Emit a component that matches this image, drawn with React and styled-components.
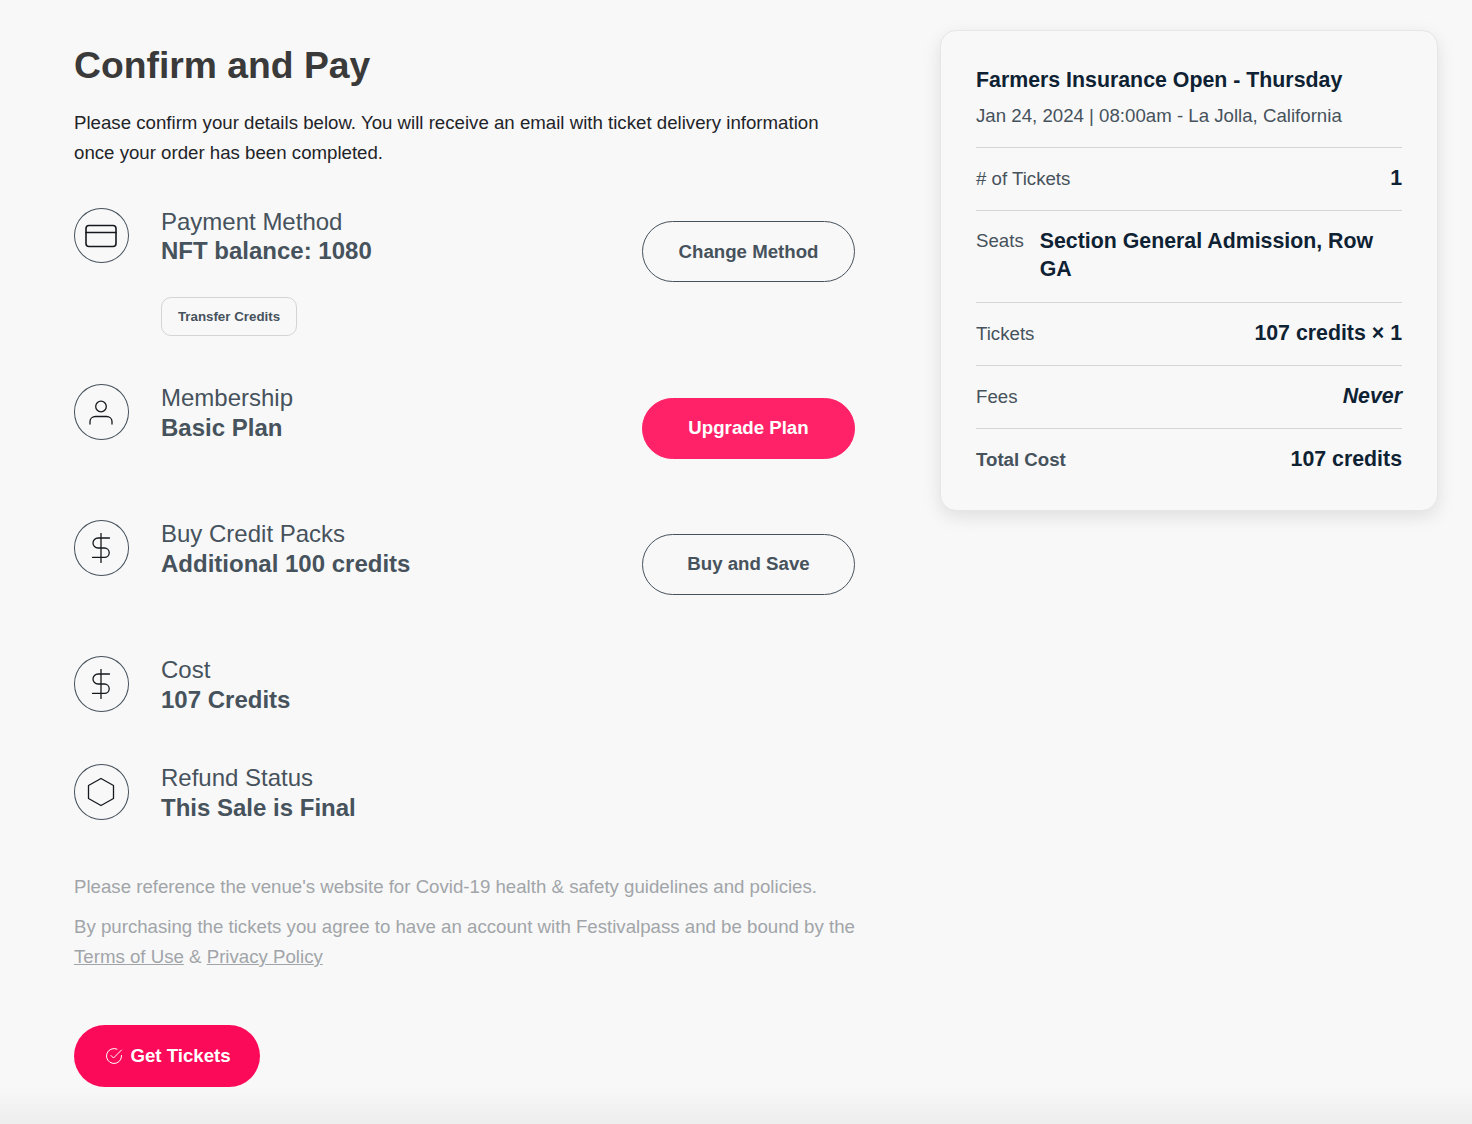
import React from 'react';
import styled, { createGlobalStyle } from 'styled-components';

const GlobalStyle = createGlobalStyle`
  html, body {
    margin: 0;
    padding: 0;
    background: #f8f8f8;
    font-family: "Liberation Sans", Arial, sans-serif;
  }
  * {
    box-sizing: border-box;
  }
`;

const Page = styled.div`
  position: relative;
  display: flex;
  align-items: flex-start;
  height: 1124px;
  padding: 30px 34px 0 74px;
  overflow: hidden;
  background: #f8f8f8;
`;

const BottomShade = styled.div`
  position: absolute;
  left: 0;
  right: 0;
  bottom: 0;
  height: 36px;
  background: linear-gradient(to bottom, rgba(236, 236, 236, 0), #ededed);
  pointer-events: none;
`;

const Main = styled.main`
  position: relative;
  z-index: 1;
  width: 781px;
  flex-shrink: 0;
`;

const Title = styled.h1`
  margin: 0;
  padding-top: 12px;
  font-size: 37.3px;
  line-height: 46px;
  font-weight: 700;
  color: #3a3a3a;
`;

const Intro = styled.p`
  margin: 20px 0 0;
  font-size: 18.67px;
  line-height: 30px;
  color: #1f2428;
`;

const Rows = styled.div`
  margin-top: 40px;
`;

const Row = styled.div`
  display: flex;
  align-items: flex-start;
  height: ${(p) => p.$height}px;
`;

const IconCircle = styled.div`
  display: flex;
  align-items: center;
  justify-content: center;
  width: 55px;
  height: 55.4px;
  padding-right: 1px;
  flex-shrink: 0;
  border: 1px solid #46525c;
  border-radius: 50%;
  color: #15191d;
`;

const RowBody = styled.div`
  flex: 1;
  margin-left: 32px;
`;

const RowLabel = styled.div`
  margin-top: -1px;
  font-size: 24px;
  line-height: 29.3px;
  color: #46525c;
`;

const RowValue = styled.div`
  font-size: 24px;
  line-height: 29px;
  font-weight: 700;
  color: #46525c;
`;

const SmallButton = styled.button`
  display: block;
  width: 136px;
  height: 39px;
  margin-top: 31.7px;
  padding: 0;
  background: transparent;
  border: 1px solid #d2d4d6;
  border-radius: 10px;
  font-family: inherit;
  font-size: 13.33px;
  font-weight: 700;
  color: #46525c;
`;

const PillButton = styled.button`
  width: 213px;
  height: 61px;
  margin-top: 13.2px;
  padding: 0;
  flex-shrink: 0;
  border-radius: 31px;
  border: 1px solid ${(p) => (p.$primary ? '#ff2268' : '#46525c')};
  background: ${(p) => (p.$primary ? '#ff2268' : 'transparent')};
  color: ${(p) => (p.$primary ? '#fff' : '#46525c')};
  font-family: inherit;
  font-size: 18.67px;
  font-weight: 700;
`;

const Notes = styled.div`
  font-size: 18.67px;
  line-height: 30px;
  color: #a1a5a9;
`;

const Note = styled.p`
  margin: 0 0 10px;
  white-space: nowrap;
`;

const NoteLink = styled.a`
  color: #a1a5a9;
  text-decoration: underline;
`;

const GetTickets = styled.button`
  display: flex;
  align-items: center;
  justify-content: center;
  gap: 7px;
  width: 186px;
  height: 62px;
  margin-top: 53px;
  padding: 0 0 0 2px;
  border: 0;
  border-radius: 31px;
  background: #fb0a59;
  color: #fff;
  font-family: inherit;
  font-size: 18.67px;
  font-weight: 700;
`;

const Card = styled.aside`
  position: relative;
  z-index: 1;
  width: 498px;
  height: 481px;
  margin-left: 85px;
  padding: 35px 35px 0;
  flex-shrink: 0;
  background: #f8f8f8;
  border: 1px solid #e6e6e6;
  border-radius: 16px;
  box-shadow: 0 6px 18px rgba(0, 0, 0, 0.1);
`;

const EventName = styled.h2`
  margin: 0;
  font-size: 21.33px;
  line-height: 28px;
  font-weight: 700;
  color: #0e2233;
`;

const EventMeta = styled.div`
  margin-top: 8px;
  padding-bottom: 17px;
  font-size: 18.67px;
  line-height: 28px;
  color: #46525c;
`;

const CardRow = styled.div`
  display: flex;
  justify-content: ${(p) => (p.$start ? 'flex-start' : 'space-between')};
  align-items: ${(p) => (p.$start ? 'flex-start' : 'center')};
  gap: 16px;
  min-height: 63px;
  padding: ${(p) => (p.$start ? '16px 0 19px' : '0')};
  border-top: 1px solid #d6d6d6;
`;

const CardLabel = styled.span`
  font-size: 18.67px;
  line-height: 28px;
  font-weight: ${(p) => (p.$bold ? 700 : 400)};
  color: #46525c;
  white-space: nowrap;
`;

const CardValue = styled.span`
  margin-top: ${(p) => (p.$wrapped ? '0' : '-2px')};
  font-size: 21.33px;
  line-height: 28px;
  font-weight: 700;
  font-style: ${(p) => (p.$italic ? 'italic' : 'normal')};
  color: #0e2233;
`;

const strokeProps = {
  fill: 'none',
  stroke: 'currentColor',
  strokeLinecap: 'round',
  strokeLinejoin: 'round',
};

const CardIcon = () => (
  <svg width="32" height="24" viewBox="0 0 32 24" {...strokeProps} strokeWidth="1.6">
    <rect x="1" y="1.5" width="30" height="21" rx="3" />
    <path d="M1 8.500h30" />
  </svg>
);

const UserIcon = () => (
  <svg width="24" height="25" viewBox="0 0 24 25" {...strokeProps} strokeWidth="1.3">
    <circle cx="12" cy="6.500" r="5.300" />
    <path d="M1 24v-2.500c0-3 2.500-5 5.500-5h11c3 0 5.500 2 5.500 5V24" />
  </svg>
);

const DollarIcon = () => (
  <svg width="20" height="30" viewBox="0 0 20 30" {...strokeProps} strokeWidth="1.3">
    <path d="M10 .5v29" />
    <path d="M18.500 5H7a5 5 0 0 0 0 10h6.500a4.700 4.700 0 0 1 0 9.400H1.500" />
  </svg>
);

const HexIcon = () => (
  <svg width="28" height="30" viewBox="0 0 28 30" {...strokeProps} strokeWidth="1.3">
    <path d="M14 1.500l12.500 7v13L14 28.500l-12.500-7v-13z" />
  </svg>
);

const CheckIcon = () => (
  <svg width="18" height="18" viewBox="0 0 18 18" {...strokeProps} strokeWidth="1">
    <path d="M16.500 8.500V9a7.500 7.500 0 1 1-4.500-6.900" />
    <path d="M6 8.500l2.500 2.500 8-8" />
  </svg>
);

const App = () => (
  <Page>
    <GlobalStyle />
    <Main>
      <Title>Confirm and Pay</Title>
      <Intro>
        Please confirm your details below. You will receive an email with ticket delivery information
        <br />
        once your order has been completed.
      </Intro>
      <Rows>
        <Row $height={176.4}>
          <IconCircle><CardIcon /></IconCircle>
          <RowBody>
            <RowLabel>Payment Method</RowLabel>
            <RowValue>NFT balance: 1080</RowValue>
            <SmallButton>Transfer Credits</SmallButton>
          </RowBody>
          <PillButton>Change Method</PillButton>
        </Row>
        <Row $height={136}>
          <IconCircle><UserIcon /></IconCircle>
          <RowBody>
            <RowLabel>Membership</RowLabel>
            <RowValue>Basic Plan</RowValue>
          </RowBody>
          <PillButton $primary>Upgrade Plan</PillButton>
        </Row>
        <Row $height={136}>
          <IconCircle><DollarIcon /></IconCircle>
          <RowBody>
            <RowLabel>Buy Credit Packs</RowLabel>
            <RowValue>Additional 100 credits</RowValue>
          </RowBody>
          <PillButton>Buy and Save</PillButton>
        </Row>
        <Row $height={108}>
          <IconCircle><DollarIcon /></IconCircle>
          <RowBody>
            <RowLabel>Cost</RowLabel>
            <RowValue>107 Credits</RowValue>
          </RowBody>
        </Row>
        <Row $height={107.6}>
          <IconCircle><HexIcon /></IconCircle>
          <RowBody>
            <RowLabel>Refund Status</RowLabel>
            <RowValue>This Sale is Final</RowValue>
          </RowBody>
        </Row>
      </Rows>
      <Notes>
        <Note>Please reference the venue's website for Covid-19 health &amp; safety guidelines and policies.</Note>
        <Note>
          By purchasing the tickets you agree to have an account with Festivalpass and be bound by the
          <br />
          <NoteLink href="#terms">Terms of Use</NoteLink> &amp; <NoteLink href="#privacy">Privacy Policy</NoteLink>
        </Note>
      </Notes>
      <GetTickets><CheckIcon />Get Tickets</GetTickets>
    </Main>
    <Card>
      <EventName>Farmers Insurance Open - Thursday</EventName>
      <EventMeta>Jan 24, 2024 | 08:00am - La Jolla, California</EventMeta>
      <CardRow>
        <CardLabel># of Tickets</CardLabel>
        <CardValue>1</CardValue>
      </CardRow>
      <CardRow $start>
        <CardLabel>Seats</CardLabel>
        <CardValue $wrapped>Section General Admission, Row GA</CardValue>
      </CardRow>
      <CardRow>
        <CardLabel>Tickets</CardLabel>
        <CardValue>107 credits × 1</CardValue>
      </CardRow>
      <CardRow>
        <CardLabel>Fees</CardLabel>
        <CardValue $italic>Never</CardValue>
      </CardRow>
      <CardRow>
        <CardLabel $bold>Total Cost</CardLabel>
        <CardValue>107 credits</CardValue>
      </CardRow>
    </Card>
    <BottomShade />
  </Page>
);

export default App;
